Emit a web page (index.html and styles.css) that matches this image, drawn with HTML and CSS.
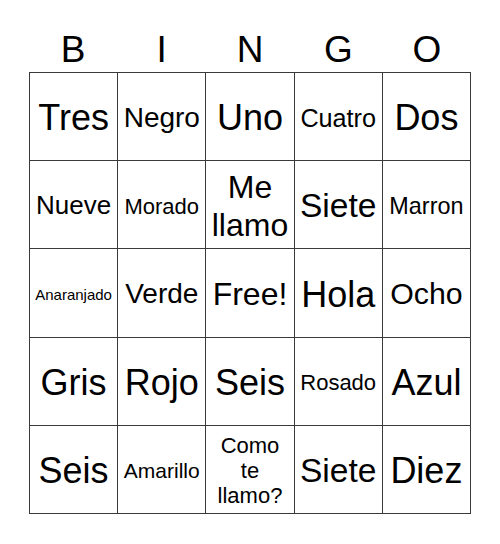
FILE: index.html
```html
<!DOCTYPE html>
<html lang="es">
<head>
<meta charset="utf-8">
<title>Bingo</title>
<link rel="stylesheet" href="styles.css">
</head>
<body>
<div class="card">
  <div class="header">
    <div class="letter">B</div>
    <div class="letter">I</div>
    <div class="letter">N</div>
    <div class="letter">G</div>
    <div class="letter">O</div>
  </div>
  <div class="grid">
    <div class="cell fs36">Tres</div>
    <div class="cell fs28">Negro</div>
    <div class="cell fs36">Uno</div>
    <div class="cell fs25">Cuatro</div>
    <div class="cell fs36">Dos</div>

    <div class="cell fs26">Nueve</div>
    <div class="cell fs22">Morado</div>
    <div class="cell fs32 tall">Me<br>llamo</div>
    <div class="cell fs34">Siete</div>
    <div class="cell fs23">Marron</div>

    <div class="cell fs15">Anaranjado</div>
    <div class="cell fs28">Verde</div>
    <div class="cell fs32">Free!</div>
    <div class="cell fs36">Hola</div>
    <div class="cell fs30">Ocho</div>

    <div class="cell fs36">Gris</div>
    <div class="cell fs36">Rojo</div>
    <div class="cell fs36">Seis</div>
    <div class="cell fs22">Rosado</div>
    <div class="cell fs36">Azul</div>

    <div class="cell fs36">Seis</div>
    <div class="cell fs21">Amarillo</div>
    <div class="cell fs22">Como<br>te<br>llamo?</div>
    <div class="cell fs34">Siete</div>
    <div class="cell fs36">Diez</div>
  </div>
</div>
</body>
</html>
```

FILE: styles.css
```css
html, body {
  margin: 0;
  padding: 0;
  background: #ffffff;
}

body {
  font-family: "Liberation Sans", Arial, sans-serif;
  color: #000000;
}

.card {
  width: 442px;
  margin: 0 auto;
}

.header {
  display: grid;
  grid-template-columns: repeat(5, 1fr);
  height: 72px;
  box-sizing: border-box;
  padding-top: 31px;
}

.letter {
  font-size: 37px;
  line-height: 37px;
  text-align: center;
}

.grid {
  display: grid;
  grid-template-columns: repeat(5, 1fr);
  grid-auto-rows: 88.2px;
  box-sizing: border-box;
  width: 442px;
  border-left: 1px solid #3a3a3a;
  border-top: 1px solid #3a3a3a;
}

.cell {
  display: flex;
  align-items: center;
  justify-content: center;
  text-align: center;
  box-sizing: border-box;
  padding-top: 3px;
  border-right: 1px solid #3a3a3a;
  border-bottom: 1px solid #3a3a3a;
  line-height: 1.15;
  white-space: nowrap;
  overflow: hidden;
}

.tall { line-height: 1.2; }

.fs15 { font-size: 15px; }
.fs21 { font-size: 21px; }
.fs22 { font-size: 22px; }
.fs23 { font-size: 23.4px; }
.fs25 { font-size: 25.2px; }
.fs26 { font-size: 26px; }
.fs28 { font-size: 28px; }
.fs30 { font-size: 30.3px; }
.fs32 { font-size: 32px; }
.fs34 { font-size: 33.6px; }
.fs36 { font-size: 36px; }
```
